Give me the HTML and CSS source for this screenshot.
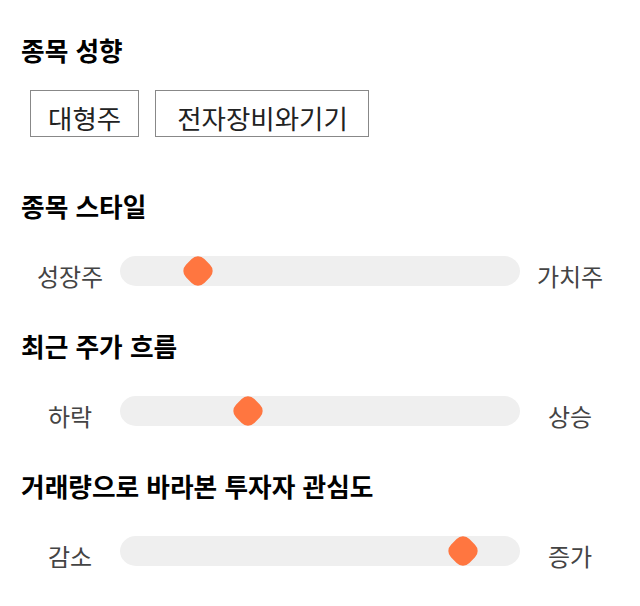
FILE: index.html
```html
<!DOCTYPE html>
<html lang="ko">
<head>
<meta charset="utf-8">
<link rel="stylesheet" href="styles.css">
</head>
<body>
<div class="page">
  <section class="sec sec-tags">
    <h2 class="title">종목 성향</h2>
    <div class="tags">
      <span class="tag">대형주</span>
      <span class="tag tag-wide">전자장비와기기</span>
    </div>
  </section>
  <section class="sec">
    <h2 class="title">종목 스타일</h2>
    <div class="slider">
      <span class="lbl">성장주</span>
      <div class="track"><span class="thumb" style="left: 19.5%"></span></div>
      <span class="lbl">가치주</span>
    </div>
  </section>
  <section class="sec">
    <h2 class="title">최근 주가 흐름</h2>
    <div class="slider">
      <span class="lbl">하락</span>
      <div class="track"><span class="thumb" style="left: 32%"></span></div>
      <span class="lbl">상승</span>
    </div>
  </section>
  <section class="sec">
    <h2 class="title">거래량으로 바라본 투자자 관심도</h2>
    <div class="slider">
      <span class="lbl">감소</span>
      <div class="track"><span class="thumb" style="left: 85.8%"></span></div>
      <span class="lbl">증가</span>
    </div>
  </section>
</div>
</body>
</html>
```
FILE: styles.css
```css
html, body {
  margin: 0;
  padding: 0;
  background: #ffffff;
}
body {
  font-family: "Noto Sans CJK KR", "Noto Sans", sans-serif;
  color: #222;
}
.page {
  padding: 32px 20px 0 20px;
  display: flex;
  flex-direction: column;
}
.sec {
  display: flex;
  flex-direction: column;
  margin-bottom: 37px;
}
.sec-tags {
  margin-bottom: 51px;
}
.title {
  margin: 0;
  font-size: 25.7px;
  line-height: 36px;
  font-weight: 700;
  color: #000;
  padding-left: 1px;
}
.tags {
  display: flex;
  gap: 16px;
  padding-left: 10px;
  margin-top: 22px;
}
.tag {
  border: 1px solid #888;
  font-size: 26.5px;
  line-height: 37px;
  padding: 8px 17px 0 17px;
  color: #222;
}
.tag-wide {
  padding-left: 21px;
  padding-right: 20px;
}
.slider {
  display: flex;
  align-items: flex-start;
  margin-top: 32px;
}
.lbl {
  width: 100px;
  text-align: center;
  font-size: 24px;
  line-height: 30px;
  padding-top: 5px;
  color: #444;
}
.track {
  position: relative;
  flex: 1;
  height: 30px;
  background: #efefef;
  border-radius: 16px / 15px;
}
.thumb {
  position: absolute;
  top: 2px;
  width: 26px;
  height: 26px;
  margin-left: -13px;
  background: #ff7640;
  border-radius: 9px;
  transform: rotate(45deg);
}
```
